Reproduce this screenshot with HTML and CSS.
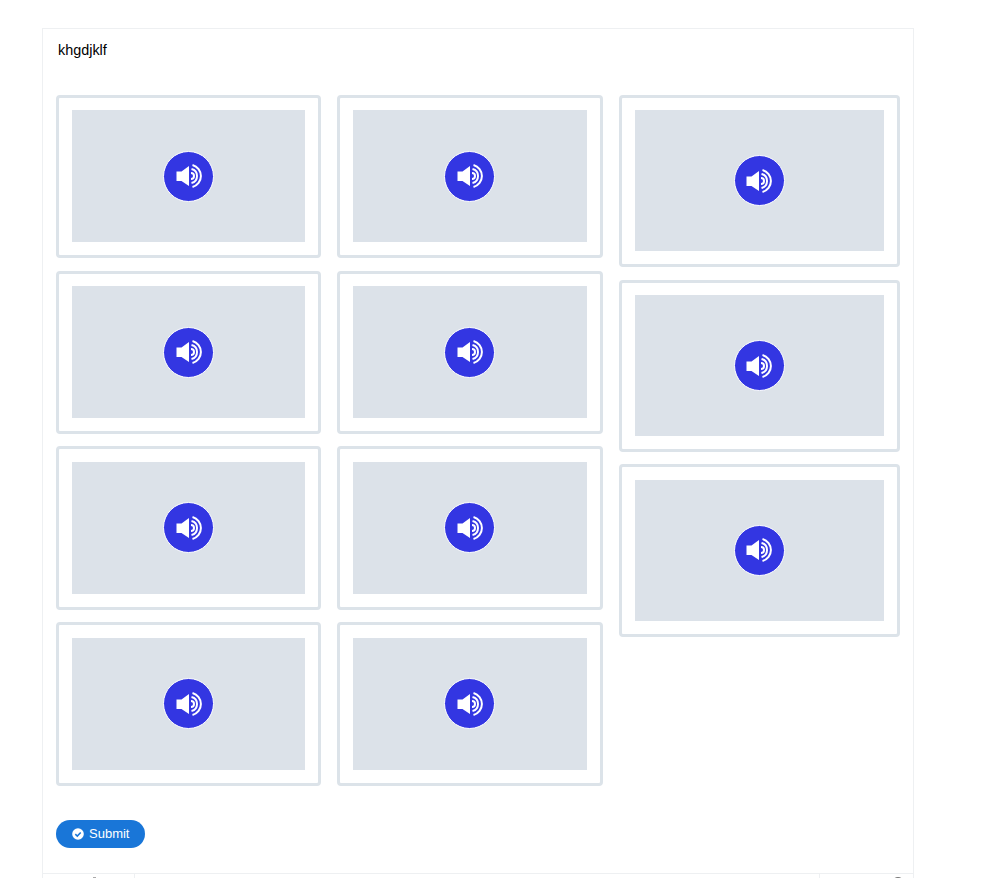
FILE: index.html
```html
<!DOCTYPE html>
<html lang="en">
<head>
  <meta charset="UTF-8" />
  <title>Audio question</title>
  <link rel="stylesheet" href="styles.css">
</head>
<body>
  <svg class="sprite" width="0" height="0" aria-hidden="true">
    <symbol id="speaker" viewBox="0 0 26 24">
      <path fill="#fff" d="M0.500 7.500h5L13 2v20l-7.500-5H0.500z"/>
      <g fill="none" stroke="#fff" stroke-width="2">
        <path d="M15 9a3 3 0 0 1 0 6"/>
        <path d="M15.500 5a7.200 7.200 0 0 1 0 14"/>
        <path d="M16.500 1a11.400 11.400 0 0 1 0 22"/>
      </g>
    </symbol>
  </svg>

  <div class="panel">
    <p class="question">khgdjklf</p>

    <div class="options">
      <div class="col">
        <div class="card"><div class="thumb"><span class="play"><svg><use href="#speaker"/></svg></span></div></div>
        <div class="card"><div class="thumb"><span class="play"><svg><use href="#speaker"/></svg></span></div></div>
        <div class="card"><div class="thumb"><span class="play"><svg><use href="#speaker"/></svg></span></div></div>
        <div class="card"><div class="thumb"><span class="play"><svg><use href="#speaker"/></svg></span></div></div>
      </div>
      <div class="col">
        <div class="card"><div class="thumb"><span class="play"><svg><use href="#speaker"/></svg></span></div></div>
        <div class="card"><div class="thumb"><span class="play"><svg><use href="#speaker"/></svg></span></div></div>
        <div class="card"><div class="thumb"><span class="play"><svg><use href="#speaker"/></svg></span></div></div>
        <div class="card"><div class="thumb"><span class="play"><svg><use href="#speaker"/></svg></span></div></div>
      </div>
      <div class="col col-wide">
        <div class="card"><div class="thumb"><span class="play"><svg><use href="#speaker"/></svg></span></div></div>
        <div class="card"><div class="thumb"><span class="play"><svg><use href="#speaker"/></svg></span></div></div>
        <div class="card"><div class="thumb"><span class="play"><svg><use href="#speaker"/></svg></span></div></div>
      </div>
    </div>

    <button class="submit" type="button">
      <svg viewBox="0 0 12 12" width="12" height="12" aria-hidden="true">
        <circle cx="6" cy="6" r="5.800" fill="#fff"/>
        <path d="M3.300 6.100l2 2 3.400-3.700" fill="none" stroke="#1976d8" stroke-width="1.500"/>
      </svg>
      Submit
    </button>

    <div class="footer">
      <div class="foot-left"><span class="foot-mark"></span></div>
      <div class="foot-mid"></div>
      <div class="foot-right"><span class="foot-dot"></span></div>
    </div>
  </div>
</body>
</html>
```

FILE: styles.css
```css
:root {
  --line: #dce3e9;
  --thumb: #dce2e9;
  --panel-line: #eef0f2;
  --play: #3336e2;
  --blue: #1976d8;
}

html, body {
  height: 100%;
  overflow: hidden;
}

body {
  margin: 0;
  background: #fff;
  font-family: "Liberation Sans", Arial, sans-serif;
  color: #000;
}

.sprite {
  position: absolute;
}

.panel {
  box-sizing: border-box;
  width: 872px;
  margin: 28px 0 0 42px;
  border: 1px solid var(--panel-line);
  border-bottom: 0;
}

.question {
  margin: 0;
  padding: 13px 0 0 15px;
  height: 53px;
  box-sizing: content-box;
  font-size: 14.400px;
  line-height: 17px;
}

/* Three masonry columns, the last one is a bit wider */
.options {
  display: grid;
  grid-template-columns: 265.300px 265.300px 281.300px;
  column-gap: 16px;
  align-items: start;
  padding: 0 13px;
}

.col {
  display: flex;
  flex-direction: column;
  gap: 12.330px;
}

.col-wide {
  gap: 12.250px;
}

.card {
  border: 3px solid var(--line);
  border-radius: 4px;
  padding: 12.400px 13px 13px;
}

.thumb {
  aspect-ratio: 1.767;
  background: var(--thumb);
  display: flex;
  align-items: center;
  justify-content: center;
}

.play {
  box-sizing: border-box;
  flex: none;
  width: 51px;
  height: 51px;
  border: 1px solid #fff;
  border-radius: 50%;
  background: var(--play);
  display: flex;
  align-items: center;
  justify-content: center;
}

.play svg {
  width: 26px;
  height: 24px;
}

.submit {
  display: flex;
  align-items: center;
  gap: 5px;
  width: 89px;
  height: 28px;
  margin: 34px 0 25px 13px;
  padding: 0 0 0 16px;
  border: 0;
  border-radius: 14px;
  background: var(--blue);
  color: #fff;
  font-family: inherit;
  font-size: 13px;
}

.footer {
  display: flex;
  height: 30px;
  border-top: 1px solid var(--panel-line);
}

.foot-left {
  width: 92px;
  padding: 3px 0 0 50px;
  box-sizing: border-box;
  border-right: 1px solid var(--panel-line);
}

.foot-mark {
  display: block;
  width: 3px;
  height: 1px;
  background: #aaa;
}

.foot-mid {
  width: 684px;
  border-right: 1px solid var(--panel-line);
}

.foot-right {
  flex: 1;
  display: flex;
  justify-content: flex-end;
  padding: 3px 9px 0 0;
}

.foot-dot {
  width: 8px;
  height: 8px;
  border: 2px solid #777;
  border-radius: 50%;
}
```
